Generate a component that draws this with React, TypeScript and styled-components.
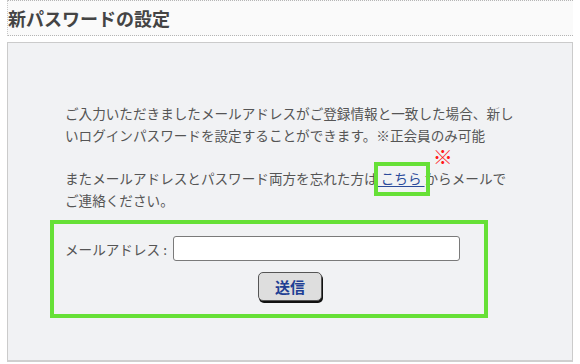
import React from "react";
import styled, { createGlobalStyle } from "styled-components";

const Global = createGlobalStyle`
  html, body { margin: 0; padding: 0; background: #ffffff; }
  body {
    font-family: "Noto Sans CJK JP", "Noto Sans", sans-serif;
    color: #555555;
  }
`;

const Page = styled.div`
  width: 580px;
  height: 364px;
  padding: 0 7px;
  box-sizing: border-box;
  overflow: hidden;
`;

const Header = styled.header`
  height: 36px;
  box-sizing: border-box;
  display: flex;
  align-items: center;
  background: #fafafa;
  border-top: 1px dotted #b5b5b5;
  border-bottom: 1px dotted #b5b5b5;
  border-left: 1px dotted #c8c8c8;
`;

const Title = styled.h2`
  margin: 0;
  padding-left: 0;
  font-size: 18px;
  font-weight: 700;
  color: #444444;
  line-height: 1;
`;

const Panel = styled.section`
  margin-top: 6px;
  height: 320px;
  box-sizing: border-box;
  background: #f1f2f4;
  border: 1px solid #cbcbcb;
  border-bottom: 2px solid #cfcfcf;
  padding-top: 59px;
`;

const Body = styled.div`
  padding-left: 57px;
  width: 450px;
  font-size: 13.6px;
  line-height: 22px;
  color: #555555;
`;

const Para = styled.p<{ $gap?: number }>`
  margin: ${(p) => p.$gap ?? 0}px 0 0;
`;

const LinkWrap = styled.span`
  position: relative;
`;

const Link = styled.a`
  color: #2b4b9b;
  text-decoration: underline;
  text-underline-offset: 2px;
`;

const Frame = styled.span`
  position: absolute;
  left: -4px;
  right: -5px;
  top: -6px;
  bottom: -8px;
  border: 4px solid #66e036;
  pointer-events: none;
`;

const Mark = styled.span`
  position: absolute;
  left: 55px;
  top: -21px;
  font-size: 20px;
  line-height: 20px;
  font-weight: 300;
  color: #ff1a1a;
`;

const FormArea = styled.form`
  position: relative;
  margin-top: 9px;
  padding-top: 16px;
  height: 98px;
  box-sizing: border-box;
`;

const FormFrame = styled.div`
  position: absolute;
  left: 42px;
  top: 0;
  width: 438px;
  height: 98px;
  box-sizing: border-box;
  border: 4px solid #66e036;
  pointer-events: none;
`;

const Row = styled.div`
  display: flex;
  align-items: center;
  padding-left: 57px;
`;

const Label = styled.label`
  width: 108px;
  font-size: 13.6px;
  color: #555555;
  white-space: nowrap;
`;

const Input = styled.input`
  width: 287px;
  height: 25px;
  box-sizing: border-box;
  border: 1px solid #7a7a7a;
  border-radius: 3px;
  background: #ffffff;
  padding: 0 4px;
  outline: none;
`;

const ButtonRow = styled.div`
  display: flex;
  justify-content: center;
  margin-top: 11px;
`;

const Submit = styled.button`
  width: 64px;
  height: 29px;
  box-sizing: border-box;
  border: 1px solid #555555;
  border-radius: 5px;
  background: #dedede;
  box-shadow: 1px 2px 0 #111111;
  color: #1f3f94;
  font-family: "Noto Sans CJK JP", sans-serif;
  font-size: 15px;
  font-weight: 700;
  line-height: 1;
  padding: 0;
  cursor: pointer;
`;

export default function App() {
  return (
    <Page>
      <Global />
      <Header>
        <Title>新パスワードの設定</Title>
      </Header>
      <Panel>
        <Body>
          <Para>
            ご入力いただきましたメールアドレスがご登録情報と一致した場合、新しいログインパスワードを設定することができます。※正会員のみ可能
          </Para>
          <Para $gap={21}>
            またメールアドレスとパスワード両方を忘れた方は
            <LinkWrap>
              <Link href="#">&nbsp;こちら&nbsp;</Link>
              <Frame />
              <Mark>※</Mark>
            </LinkWrap>
            からメールでご連絡ください。
          </Para>
        </Body>
        <FormArea onSubmit={(e) => e.preventDefault()}>
          <FormFrame />
          <Row>
            <Label htmlFor="mail">メールアドレス :</Label>
            <Input id="mail" type="text" />
          </Row>
          <ButtonRow>
            <Submit type="submit">送信</Submit>
          </ButtonRow>
        </FormArea>
      </Panel>
    </Page>
  );
}
